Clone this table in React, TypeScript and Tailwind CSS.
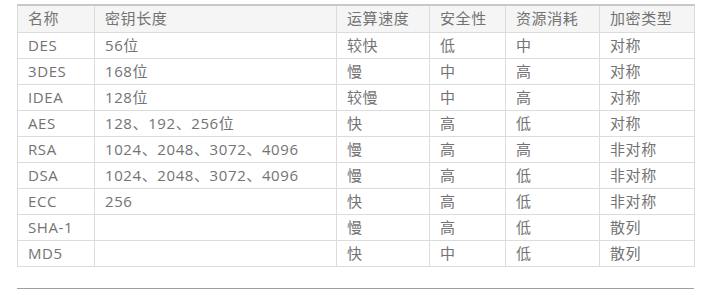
import React from 'react';

const cols = [
  { key: 'name', label: '名称', w: 'w-[77px]' },
  { key: 'len', label: '密钥长度', w: 'w-[242px]' },
  { key: 'speed', label: '运算速度', w: 'w-[93px]' },
  { key: 'safe', label: '安全性', w: 'w-[76px]' },
  { key: 'cost', label: '资源消耗', w: 'w-[94px]' },
  { key: 'type', label: '加密类型', w: 'w-[95px]' },
];

const rows = [
  ['DES', '56位', '较快', '低', '中', '对称'],
  ['3DES', '168位', '慢', '中', '高', '对称'],
  ['IDEA', '128位', '较慢', '中', '高', '对称'],
  ['AES', '128、192、256位', '快', '高', '低', '对称'],
  ['RSA', '1024、2048、3072、4096', '慢', '高', '高', '非对称'],
  ['DSA', '1024、2048、3072、4096', '慢', '高', '低', '非对称'],
  ['ECC', '256', '快', '高', '低', '非对称'],
  ['SHA-1', '', '慢', '高', '低', '散列'],
  ['MD5', '', '快', '中', '低', '散列'],
];

export default function App() {
  return (
    <div
      className="w-[704px] h-[295px] bg-white pl-[17px] pt-[4px]"
      style={{ fontFamily: '"Open Sans", "Noto Sans CJK SC", sans-serif' }}
    >
      <table className="table-fixed border-collapse w-[677px] text-[15px] tracking-[0.6px] text-[#737373] leading-none">
        <thead>
          <tr className="bg-[#f5f5f5] h-[27px]">
            {cols.map((c) => (
              <th
                key={c.key}
                className={`${c.w} border border-[#dcdcdc] border-t-[#c8c8c8] border-t-2 px-[10px] text-left font-normal`}
              >
                {c.label}
              </th>
            ))}
          </tr>
        </thead>
        <tbody>
          {rows.map((r) => (
            <tr key={r[0]} className="h-[26px]">
              {r.map((v, i) => (
                <td key={i} className="border border-[#dcdcdc] px-[10px] whitespace-nowrap">
                  {v}
                </td>
              ))}
            </tr>
          ))}
        </tbody>
      </table>
      <div className="w-[677px] h-px bg-[#a0a0a0] mt-[21px]" />
    </div>
  );
}
